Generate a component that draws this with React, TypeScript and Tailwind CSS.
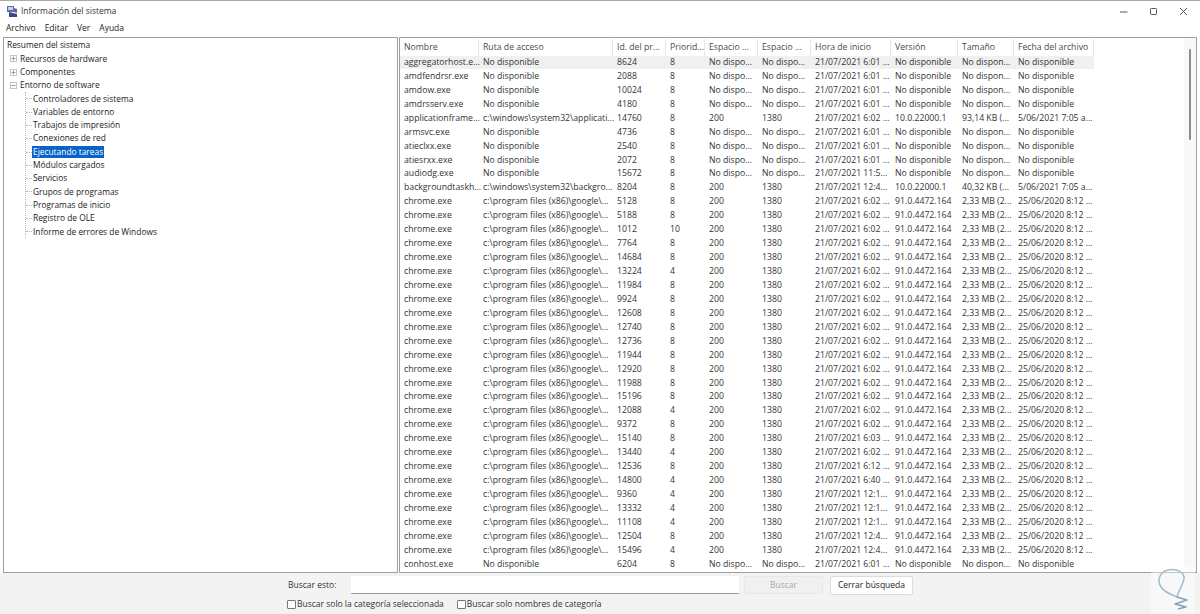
const na = "No disponible";
const dispo = "No dispo...";
const chromePath = "c:\\program files (x86)\\google\\...";

const columns = [
  { label: "Nombre", width: 79 },
  { label: "Ruta de acceso", width: 134 },
  { label: "Id. del pr...", width: 53 },
  { label: "Priorid...", width: 39 },
  { label: "Espacio ...", width: 53 },
  { label: "Espacio ...", width: 53 },
  { label: "Hora de inicio", width: 80 },
  { label: "Versión", width: 67 },
  { label: "Tamaño", width: 56 },
  { label: "Fecha del archivo", width: 80 },
];

type Row = string[];

const noInfo = (name: string, pid: string, time = "21/07/2021 6:01 ..."): Row => [
  name,
  na,
  pid,
  "8",
  dispo,
  dispo,
  time,
  na,
  "No dispon...",
  na,
];

const chrome = (pid: string, pri: string, time: string): Row => [
  "chrome.exe",
  chromePath,
  pid,
  pri,
  "200",
  "1380",
  `21/07/2021 ${time}`,
  "91.0.4472.164",
  "2,33 MB (2...",
  "25/06/2020 8:12 ...",
];

const rows: Row[] = [
  noInfo("aggregatorhost.e...", "8624"),
  noInfo("amdfendrsr.exe", "2088"),
  noInfo("amdow.exe", "10024"),
  noInfo("amdrsserv.exe", "4180"),
  ["applicationframe...", "c:\\windows\\system32\\applicati...", "14760", "8", "200", "1380", "21/07/2021 6:02 ...", "10.0.22000.1", "93,14 KB (...", "5/06/2021 7:05 a..."],
  noInfo("armsvc.exe", "4736"),
  noInfo("atieclxx.exe", "2540"),
  noInfo("atiesrxx.exe", "2072"),
  noInfo("audiodg.exe", "15672", "21/07/2021 11:5..."),
  ["backgroundtaskh...", "c:\\windows\\system32\\backgro...", "8204", "8", "200", "1380", "21/07/2021 12:4...", "10.0.22000.1", "40,32 KB (...", "5/06/2021 7:05 a..."],
  chrome("5128", "8", "6:02 ..."),
  chrome("5188", "8", "6:02 ..."),
  chrome("1012", "10", "6:02 ..."),
  chrome("7764", "8", "6:02 ..."),
  chrome("14684", "8", "6:02 ..."),
  chrome("13224", "4", "6:02 ..."),
  chrome("11984", "8", "6:02 ..."),
  chrome("9924", "8", "6:02 ..."),
  chrome("12608", "8", "6:02 ..."),
  chrome("12740", "8", "6:02 ..."),
  chrome("12736", "8", "6:02 ..."),
  chrome("11944", "8", "6:02 ..."),
  chrome("12920", "8", "6:02 ..."),
  chrome("11988", "8", "6:02 ..."),
  chrome("15196", "8", "6:02 ..."),
  chrome("12088", "4", "6:02 ..."),
  chrome("9372", "8", "6:02 ..."),
  chrome("15140", "8", "6:03 ..."),
  chrome("13440", "4", "6:02 ..."),
  chrome("12536", "8", "6:12 ..."),
  chrome("14800", "4", "6:40 ..."),
  chrome("9360", "4", "12:1..."),
  chrome("13332", "4", "12:1..."),
  chrome("11108", "4", "12:1..."),
  chrome("12504", "8", "12:4..."),
  chrome("15496", "4", "12:4..."),
  noInfo("conhost.exe", "6204"),
];

const softwareItems = [
  "Controladores de sistema",
  "Variables de entorno",
  "Trabajos de impresión",
  "Conexiones de red",
  "Ejecutando tareas",
  "Módulos cargados",
  "Servicios",
  "Grupos de programas",
  "Programas de inicio",
  "Registro de OLE",
  "Informe de errores de Windows",
];

function Expander({ open }: { open?: boolean }) {
  return (
    <svg width="7" height="7" viewBox="0 0 7 7" className="shrink-0">
      <rect x="0.5" y="0.5" width="6" height="6" fill="#fff" stroke="#c4c4c4" />
      <path d={open ? "M1.5 3.5h4" : "M1.5 3.5h4M3.5 1.5v4"} stroke="#9a9a9a" />
    </svg>
  );
}

function AppIcon() {
  return (
    <svg width="12" height="13" viewBox="0 0 12 13" className="shrink-0">
      <rect x="1" y="1" width="7" height="6" fill="#5a6fb0" />
      <rect x="2" y="2" width="5" height="3" fill="#c6d2ec" />
      <path d="M3 7l8 2v3H3z" fill="#3c4488" />
      <path d="M8 3l3 1v4L8 7z" fill="#8a4f9a" />
    </svg>
  );
}

function SystemTree() {
  return (
    <div className="w-[395px] shrink-0 border border-[#a0a0a0] bg-white pt-[1px] pl-[3px] text-[8.4px] text-[#1a1a1a]">
      <div className="flex h-[13.3px] items-center">Resumen del sistema</div>
      <div className="flex h-[13.3px] items-center gap-[3px] pl-[3px]">
        <Expander />
        Recursos de hardware
      </div>
      <div className="flex h-[13.3px] items-center gap-[3px] pl-[3px]">
        <Expander />
        Componentes
      </div>
      <div className="flex h-[13.3px] items-center gap-[3px] pl-[3px]">
        <Expander open />
        Entorno de software
      </div>
      <div className="ml-[18px] border-l border-dotted border-[#b4b4b4]">
        {softwareItems.map((item, i) => (
          <div key={item} className="flex h-[13.3px] items-center">
            <span className="h-0 w-[6px] shrink-0 border-t border-dotted border-[#b4b4b4]" />
            <span
              className={
                i === 4 ? "bg-[#0a64c8] px-[1px] text-white" : "px-[1px]"
              }
            >
              {item}
            </span>
          </div>
        ))}
      </div>
    </div>
  );
}

function ProcessTable() {
  return (
    <div className="flex min-w-0 flex-1 border border-[#a0a0a0] bg-white text-[8.7px] text-[#333]">
      <div className="min-w-0 flex-1 pt-[1px]">
        <div className="flex h-[16.5px] items-center text-[#4a4a4a]">
          {columns.map((col, i) => (
            <div
              key={i}
              style={{ width: col.width }}
              className="h-full shrink-0 border-r border-[#e6e6e6] pl-[4px] leading-[16.5px] whitespace-nowrap"
            >
              {col.label}
            </div>
          ))}
        </div>
        {rows.map((row, r) => (
          <div
            key={r}
            className={
              r === 0
                ? "flex h-[13.94px] w-[694px] items-center bg-[#f0f0f0]"
                : "flex h-[13.94px] items-center"
            }
          >
            {row.map((cell, c) => (
              <div
                key={c}
                style={{ width: columns[c].width }}
                className="shrink-0 pl-[4px] whitespace-nowrap"
              >
                {cell}
              </div>
            ))}
          </div>
        ))}
      </div>
      {/* overlay scrollbar, collapsed to a thin thumb */}
      <div className="w-[12px] shrink-0 bg-[#f8f8f8] pt-[11px]">
        <div className="ml-[5px] h-[91px] w-[2px] rounded-full bg-[#8c8c8c]" />
      </div>
    </div>
  );
}

export default function App() {
  return (
    <div
      className="relative flex h-[614px] w-[1200px] flex-col overflow-hidden bg-[#f3f3f3] text-[8.5px] text-[#222]"
      style={{ fontFamily: '"Open Sans", "Noto Sans", sans-serif' }}
    >
      <header className="flex h-[21px] shrink-0 items-center border-t border-[#a9a9a9] bg-white pl-[6px]">
        <AppIcon />
        <span className="ml-[3px] text-[#333]">Información del sistema</span>
        <div className="ml-auto flex items-center gap-[21px] pr-[12px] text-[#444]">
          <svg width="9" height="9" viewBox="0 0 9 9">
            <path d="M1 5h7.5" stroke="#555" />
          </svg>
          <svg width="9" height="9" viewBox="0 0 9 9">
            <rect x="1.5" y="1.5" width="6" height="6" rx="0.8" fill="none" stroke="#555" />
          </svg>
          <svg width="9" height="9" viewBox="0 0 9 9">
            <path d="M1 1l7 7M8 1l-7 7" stroke="#555" />
          </svg>
        </div>
      </header>
      <nav className="flex h-[15px] shrink-0 items-center gap-[9px] bg-white pl-[6px] text-[#222]">
        <span>Archivo</span>
        <span>Editar</span>
        <span>Ver</span>
        <span>Ayuda</span>
      </nav>
      <main className="flex h-[537px] shrink-0 gap-[1px] bg-white px-[3px] pt-[1px]">
        <SystemTree />
        <ProcessTable />
      </main>
      <footer className="flex flex-1 flex-col pt-[1px] pl-[288px]">
        <div className="flex h-[22px] items-center">
          <span className="w-[63px] text-[#333]">Buscar esto:</span>
          <div className="h-[18px] w-[388px] border-b border-[#9a9a9a] bg-white" />
          <button className="ml-[5px] h-[18px] w-[79px] rounded-[2px] border border-[#e8e8e8] bg-[#f0f0f0] text-[#a8a8a8]">
            Buscar
          </button>
          <button className="ml-[7px] h-[19px] w-[83px] rounded-[2px] border border-[#dcdcdc] bg-white text-[#222]">
            Cerrar búsqueda
          </button>
        </div>
        <div className="-ml-[1px] flex h-[16px] items-center text-[#333]">
          <label className="flex items-center gap-[1px]">
            <span className="h-[9px] w-[9px] rounded-[1px] border border-[#777] bg-white" />
            Buscar solo la categoría seleccionada
          </label>
          <label className="ml-[13px] flex items-center gap-[1px]">
            <span className="h-[9px] w-[9px] rounded-[1px] border border-[#777] bg-white" />
            Buscar solo nombres de categoría
          </label>
        </div>
      </footer>
      {/* watermark logo over the bottom corner */}
      <svg
        width="44"
        height="48"
        viewBox="0 0 44 48"
        className="absolute top-[566px] left-[1151px]"
      >
        <rect width="44" height="48" fill="#fff" opacity="0.4" />
        <path
          d="M26 31C20 28 14 27 10 21 6 15 8 6 17 4 25 2 34 6 33 13 32 19 28 23 26 31"
          fill="none"
          stroke="#9fbccb"
          strokeWidth="1.5"
        />
        <path
          d="M26 31L36 34 24 38 35 41 27 43"
          fill="none"
          stroke="#7ea6bb"
          strokeWidth="1.5"
          strokeLinejoin="round"
        />
      </svg>
    </div>
  );
}
